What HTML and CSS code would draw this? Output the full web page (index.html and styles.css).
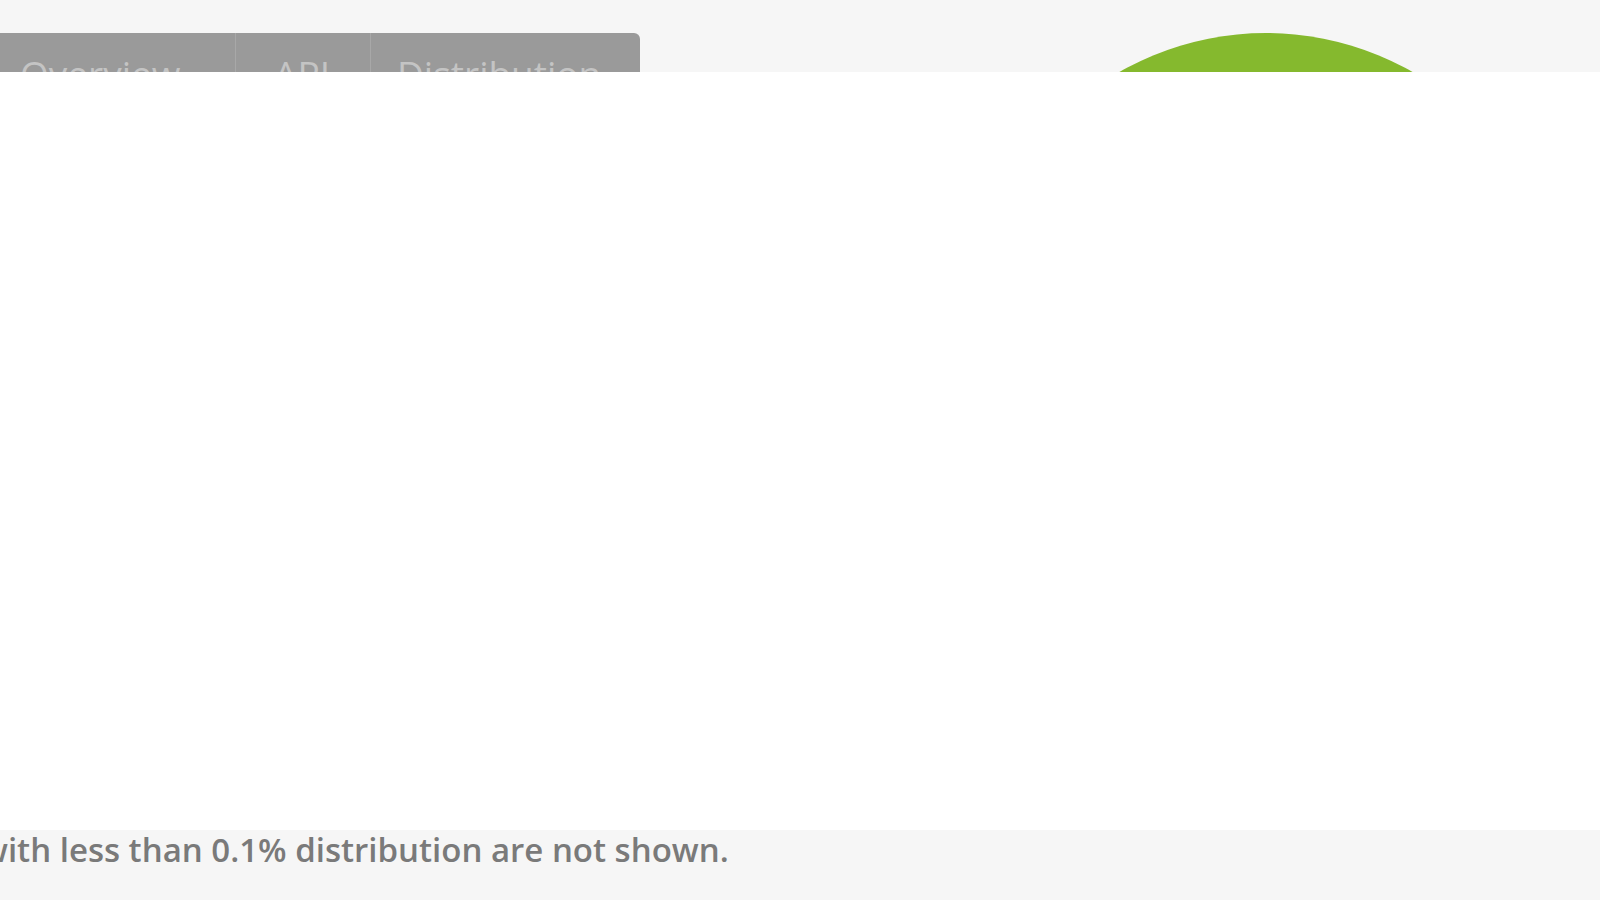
FILE: index.html
```html
<!DOCTYPE html>
<html lang="en">
<head>
<meta charset="utf-8">
<title>Distribution</title>
<link rel="stylesheet" href="styles.css">
</head>
<body>
<header class="top">
  <nav class="tabs">
    <div class="tab tab-first">Overview</div>
    <div class="tab tab-mid">API</div>
    <div class="tab tab-last">Distribution</div>
  </nav>
  <div class="chart"></div>
</header>
<main class="panel"></main>
<footer class="foot">
  <p class="note">Browsers with less than 0.1% distribution are not shown.</p>
</footer>
</body>
</html>
```

FILE: styles.css
```css
html, body {
  margin: 0;
  padding: 0;
  background: #f6f6f6;
  font-family: "Open Sans", "Liberation Sans", sans-serif;
  overflow: hidden;
}

.top {
  height: 72px;
  overflow: hidden;
  display: flex;
  align-items: flex-start;
  padding-top: 33px;
  box-sizing: border-box;
}

.tabs {
  display: flex;
  width: 640px;
  height: 90px;
  background: #9a9a9a;
  border-top-right-radius: 6px;
  flex: none;
}

.tab {
  color: #c4c4c4;
  font-size: 37px;
  line-height: 1;
  padding-top: 22px;
  box-sizing: border-box;
  white-space: nowrap;
}

.tab-first {
  width: 236px;
  padding-left: 20px;
  border-right: 1px solid #a8a8a8;
}

.tab-mid {
  width: 135px;
  padding-left: 38px;
  border-right: 1px solid #a8a8a8;
}

.tab-last {
  flex: 1;
  padding-left: 26px;
}

.chart {
  flex: none;
  width: 590px;
  height: 590px;
  margin-left: 331px;
  border-radius: 50%;
  background: #85b92e;
}

.panel {
  display: block;
  height: 758px;
  background: #ffffff;
}

.foot {
  height: 70px;
  overflow: hidden;
}

.note {
  margin: 0;
  font-size: 33px;
  line-height: 40px;
  font-weight: 600;
  color: #7a7a7a;
  white-space: nowrap;
  text-indent: -176px;
}
```
